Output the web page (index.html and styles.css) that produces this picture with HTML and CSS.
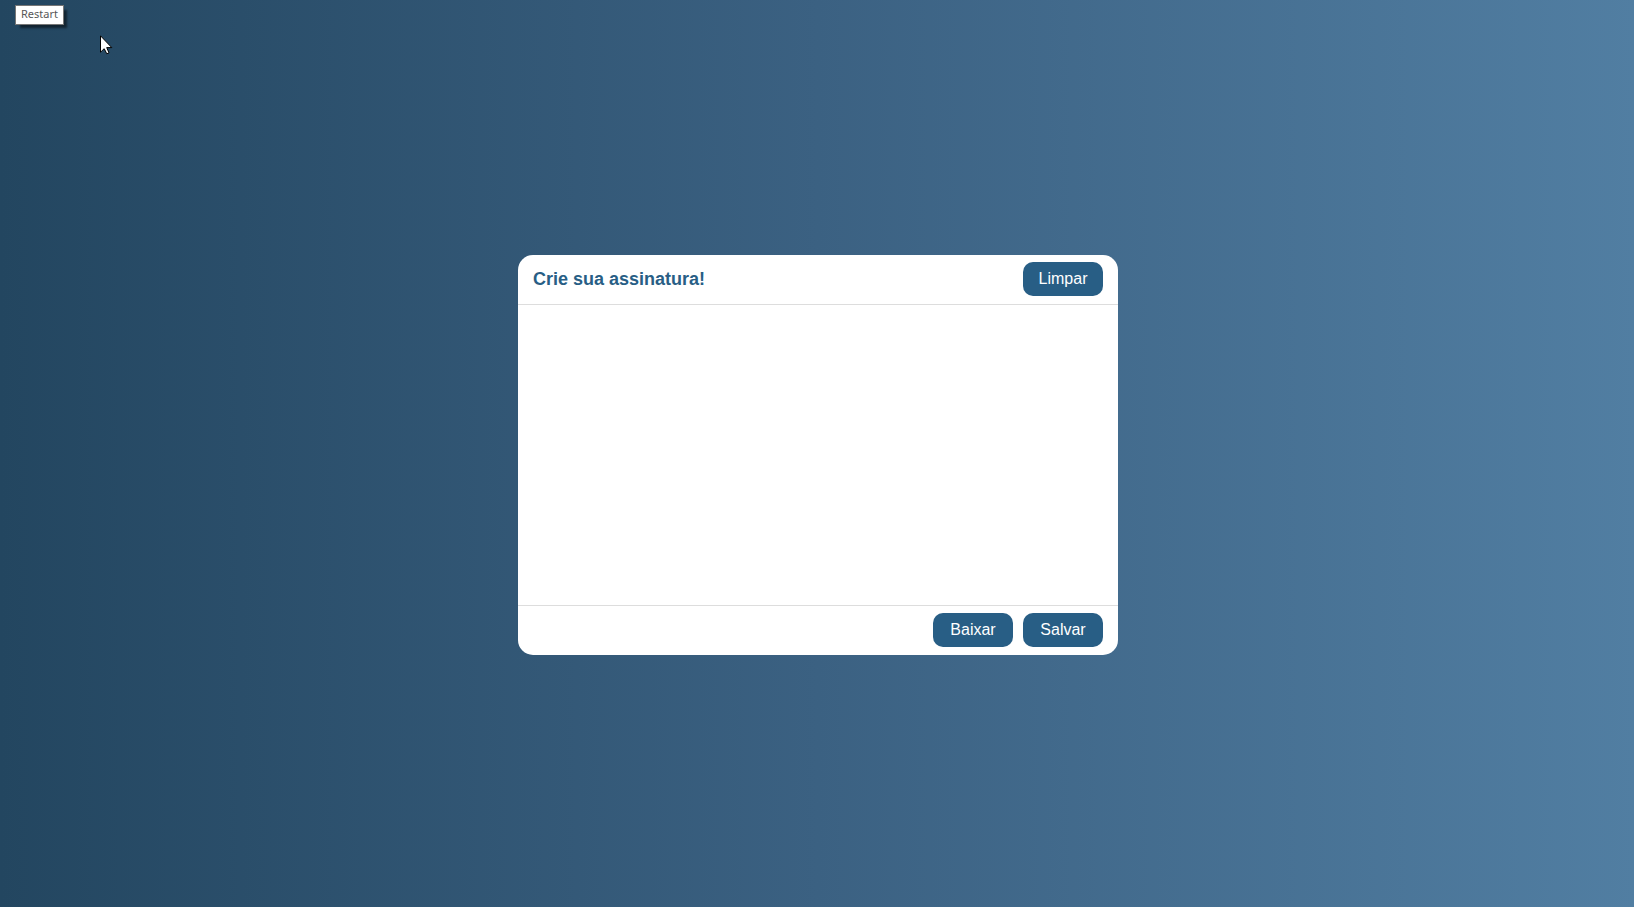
FILE: index.html
```html
<!DOCTYPE html>
<html lang="pt-BR">
<head>
<meta charset="utf-8">
<title>Assinatura</title>
<link rel="stylesheet" href="styles.css">
</head>
<body>
<div class="tooltip" role="tooltip">Restart</div>
<svg class="cursor" width="13" height="20" viewBox="0 0 13 20" aria-hidden="true">
  <path d="M.5 .8V17.2L4.2 13.7L6.8 18.8L9 17.8L6.7 12.6H11.8Z" fill="#fff" stroke="#000" stroke-width="1"/>
</svg>
<main class="card">
  <header class="card-header">
    <h1 class="title">Crie sua assinatura!</h1>
    <button class="btn" type="button">Limpar</button>
  </header>
  <canvas class="pad" aria-label="Área de assinatura"></canvas>
  <footer class="card-footer">
    <button class="btn" type="button">Baixar</button>
    <button class="btn" type="button">Salvar</button>
  </footer>
</main>
</body>
</html>
```

FILE: styles.css
```css
* {
  box-sizing: border-box;
  margin: 0;
  padding: 0;
}

body {
  display: flex;
  align-items: center;
  justify-content: center;
  min-height: 100vh;
  padding: 3px 0 0 2px;
  font-family: "Liberation Sans", Arial, sans-serif;
  background: linear-gradient(to right, #234660, #3b6182 50%, #517ea2);
}

.card {
  display: flex;
  flex-direction: column;
  width: 100%;
  max-width: 600px;
  overflow: hidden;
  background: #fff;
  border-radius: 15px;
}

.card-header,
.card-footer {
  display: flex;
  align-items: center;
  gap: 10px;
  padding: 7px 15px 8px;
}

.card-header {
  justify-content: space-between;
  border-bottom: 1px solid #ddd;
}

.card-footer {
  justify-content: flex-end;
  border-top: 1px solid #ddd;
}

.title {
  font-size: 18px;
  line-height: 20px;
  color: #285e85;
}

.pad {
  display: block;
  width: 100%;
  height: 300px;
}

.btn {
  width: 80px;
  height: 34px;
  font-family: inherit;
  font-size: 16px;
  color: #fff;
  background: #285e85;
  border: none;
  border-radius: 10px;
  cursor: pointer;
}

.tooltip {
  position: absolute;
  top: 5px;
  left: 15px;
  padding: 0 5px 2px;
  font-family: "Noto Sans", sans-serif;
  font-size: 11px;
  line-height: 16px;
  color: #575757;
  background: #fff;
  border: 1px solid #767676;
  box-shadow: 4px 4px 2px -1px rgba(0, 0, 0, 0.5);
}

.cursor {
  position: absolute;
  top: 35px;
  left: 100px;
}
```
